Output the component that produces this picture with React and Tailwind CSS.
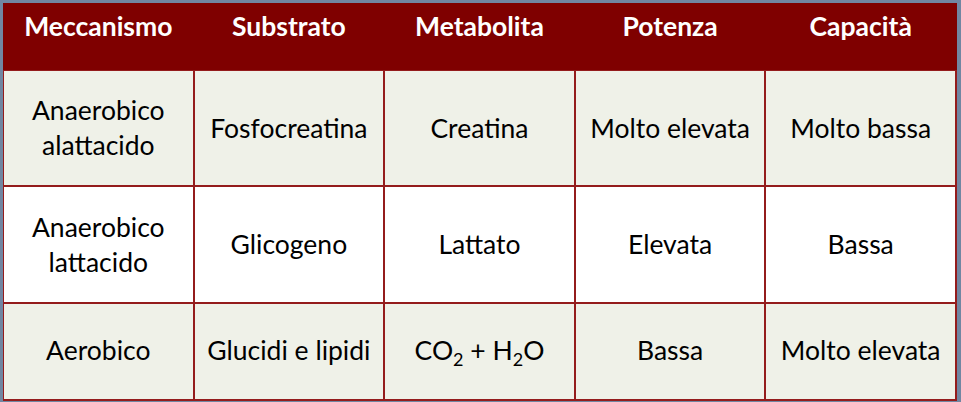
import React from 'react';

const headers = ['Meccanismo', 'Substrato', 'Metabolita', 'Potenza', 'Capacità'];

const rows = [
  {
    bg: 'bg-[#eff1e8]',
    h: 'h-[114px]',
    cells: [['Anaerobico', 'alattacido'], ['Fosfocreatina'], ['Creatina'], ['Molto elevata'], ['Molto bassa']],
  },
  {
    bg: 'bg-white',
    h: 'h-[115px]',
    cells: [['Anaerobico', 'lattacido'], ['Glicogeno'], ['Lattato'], ['Elevata'], ['Bassa']],
  },
  {
    bg: 'bg-[#eff1e8] pb-[3px]',
    h: 'h-[95px]',
    cells: [['Aerobico'], ['Glucidi e lipidi'], ['co2'], ['Bassa'], ['Molto elevata']],
  },
];

function CellText({ lines }) {
  if (lines[0] === 'co2') {
    return (
      <span>
        CO<sub className="text-[18px] relative top-[6px] align-baseline">2</sub> + H
        <sub className="text-[18px] relative top-[6px] align-baseline">2</sub>O
      </span>
    );
  }
  return lines.map((l, i) => <div key={i}>{l}</div>);
}

export default function App() {
  return (
    <div className="w-[961px] h-[402px] bg-[#7186a2] p-[3px] font-['Lato','Open_Sans',sans-serif]">
      <div className="w-[954px] bg-[#941c1c]">
        {/* header */}
        <div className="grid grid-cols-5 gap-x-[2px] bg-[#7f0000] h-[67px] pl-[1px] pr-[2px]">
          {headers.map((t) => (
            <div key={t} className="text-white font-bold text-[26.5px] text-center pt-[6px] leading-[34px]">
              {t}
            </div>
          ))}
        </div>
        {/* body */}
        <div className="flex flex-col gap-y-[2px] pt-[1px] pb-[2px] pl-[1px] pr-[2px]">
          {rows.map((r, i) => (
            <div key={i} className="grid grid-cols-5 gap-x-[2px]">
              {r.cells.map((c, j) => (
                <div
                  key={j}
                  className={`${r.bg} ${r.h} flex flex-col items-center justify-center text-center text-[26.5px] leading-[35px] text-black`}
                >
                  <CellText lines={c} />
                </div>
              ))}
            </div>
          ))}
        </div>
      </div>
    </div>
  );
}
